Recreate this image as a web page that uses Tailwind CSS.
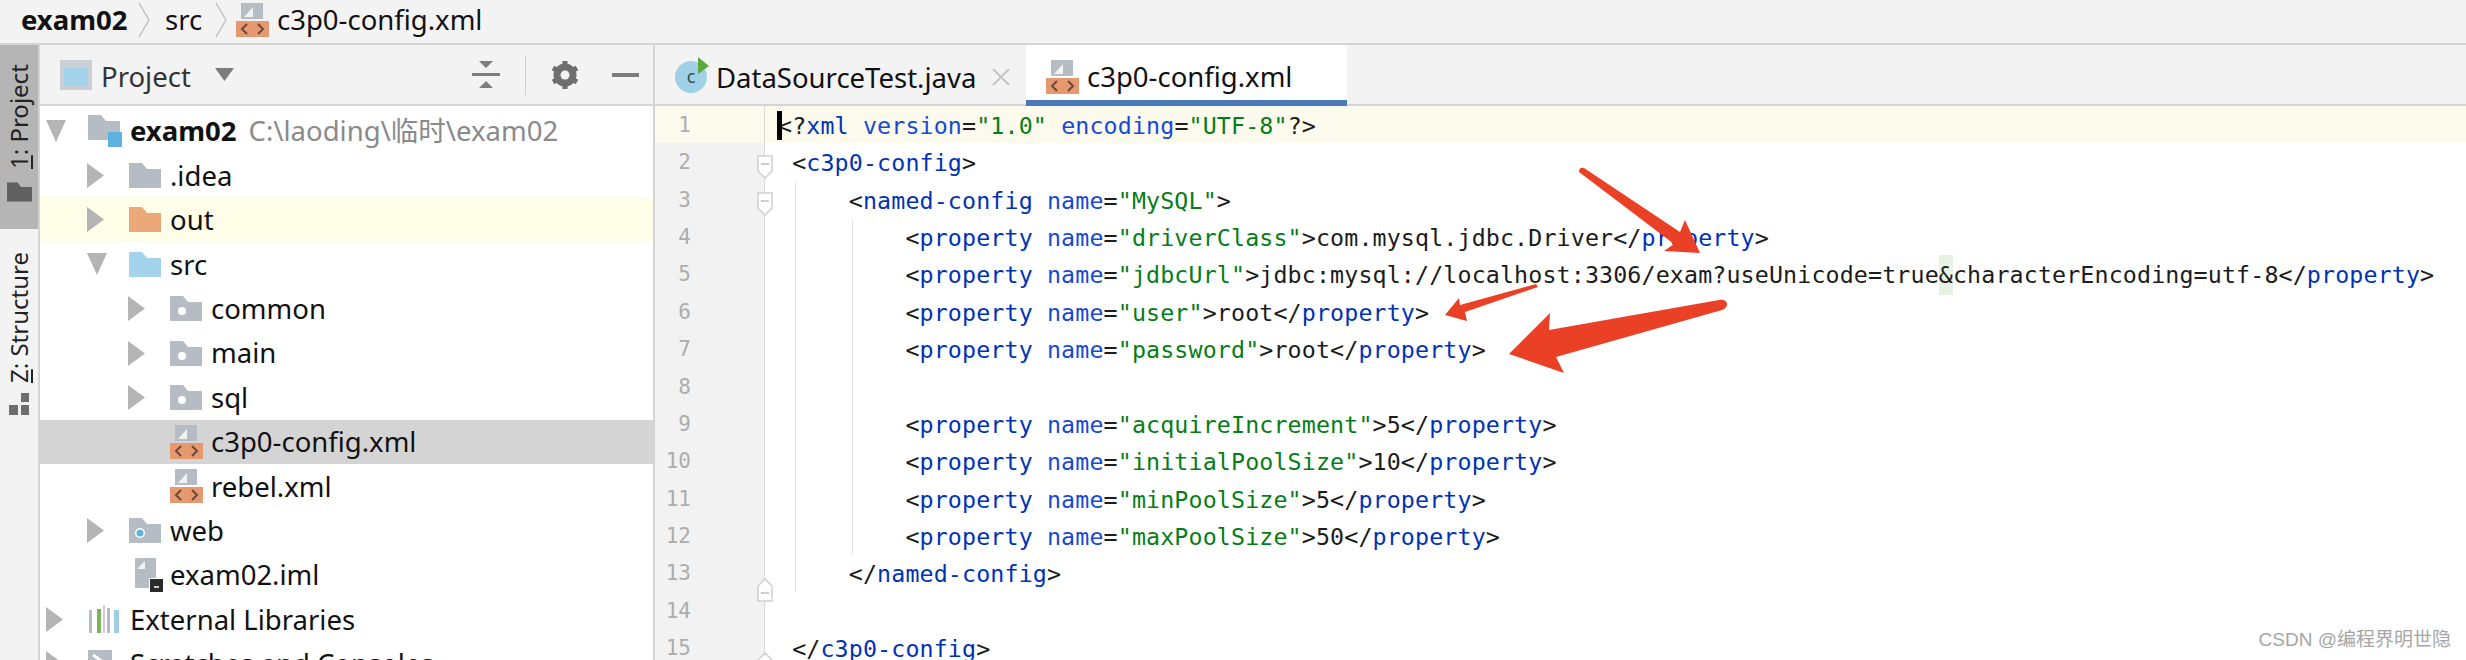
<!DOCTYPE html>
<html lang="en">
<head>
  <title>exam02 - c3p0-config.xml</title>
  <meta charset="utf-8">
  <script src="https://cdn.jsdelivr.net/npm/@tailwindcss/browser@4"></script>
</head>

<body class="bg-white">
  <!-- shared icons -->
  <svg class="hidden">
    <symbol id="folder" viewBox="0 0 32 25"><path d="M0 0H13L18 6H32V25H0Z"/></symbol>
    <symbol id="xml" viewBox="0 0 33 34">
      <path d="M5 0H27V16H5Z" fill="#b5bcc4"/>
      <path d="M8 14L17 4V14Z" fill="#f2f2f2"/>
      <path d="M0 18H33V34H0Z" fill="#e6986f"/>
      <path d="M11 21L6 26L11 31M22 21L27 26L22 31" fill="none" stroke="#6b4a3a" stroke-width="2"/>
    </symbol>
    <symbol id="right" viewBox="0 0 17 25"><path d="M0 0L17 12.5L0 25Z" fill="#b4b4b4"/></symbol>
    <symbol id="down" viewBox="0 0 20 22"><path d="M0 0H20L10 22Z" fill="#b4b4b4"/></symbol>
    <symbol id="fold" viewBox="0 0 16 24"><path d="M1 1H15V16L8 23L1 16Z" fill="#fff" stroke="#cfcfcf" stroke-width="1.5"/><path d="M4 9H12" stroke="#bdbdbd" stroke-width="1.5"/></symbol>
    <symbol id="foldend" viewBox="0 0 16 24"><path d="M1 23H15V8L8 1L1 8Z" fill="#fff" stroke="#cfcfcf" stroke-width="1.5"/><path d="M4 15H12" stroke="#bdbdbd" stroke-width="1.5"/></symbol>
  </svg>

  <div class="relative flex flex-col w-[2466px] h-[660px] overflow-hidden font-['Noto_Sans','Noto_Sans_CJK_SC',sans-serif] text-[27.500px] text-[#111]">

    <!-- Breadcrumb -->
    <div class="flex items-center h-[45px] shrink-0 bg-[#f3f3f3] border-b-2 border-[#d4d4d4] pl-[21px] pb-[4px]">
      <span class="font-bold w-[108px]">exam02</span>
      <svg class="w-[12px] h-[36px] ml-[9px]" viewBox="0 0 12 36"><path d="M1 1L11 18L1 35" fill="none" stroke="#c6c6c6" stroke-width="1.5"/></svg>
      <span class="ml-[15px] w-[38px]">src</span>
      <svg class="w-[12px] h-[36px] ml-[12px]" viewBox="0 0 12 36"><path d="M1 1L11 18L1 35" fill="none" stroke="#c6c6c6" stroke-width="1.5"/></svg>
      <svg class="w-[33px] h-[34px] ml-[9px]"><use href="#xml"/></svg>
      <span class="ml-[8px]">c3p0-config.xml</span>
    </div>

    <div class="flex flex-1 min-h-0">
      <!-- Tool window strip -->
      <div class="flex flex-col w-[40px] shrink-0 bg-[#f3f3f3] border-r-2 border-[#d4d4d4] text-[#222] text-[24px]">
        <div class="flex flex-col items-center h-[184px] bg-[#b5b5b5] pt-[18px]">
          <span class="[writing-mode:vertical-rl] rotate-180 leading-none h-[108px] text-center whitespace-nowrap"><span class="underline">1</span>: Project</span>
          <svg class="w-[25px] h-[22px] mt-[10px]" viewBox="0 0 32 25" fill="#616161"><use href="#folder"/></svg>
        </div>
        <div class="flex flex-col items-center pt-[24px]">
          <span class="[writing-mode:vertical-rl] rotate-180 leading-none h-[130px] text-center whitespace-nowrap"><span class="underline">Z</span>: Structure</span>
          <svg class="w-[22px] h-[22px] mt-[10px]" viewBox="0 0 22 22" fill="#6e6e6e"><path d="M13 0H21V9H13ZM1 12H10V22H1ZM13 12H21V22H13Z"/></svg>
        </div>
      </div>

      <!-- Project panel -->
      <div class="flex flex-col w-[615px] shrink-0 border-r-2 border-[#d4d4d4]">
        <div class="flex items-center h-[61px] shrink-0 bg-[#f3f3f3] border-b-2 border-[#d4d4d4] pl-[20px] text-[#333]">
          <svg class="w-[32px] h-[30px]" viewBox="0 0 32 30"><path d="M0 0H32V30H0Z" fill="#c9cfd4"/><path d="M4 8H28V26H4Z" fill="#a3d4ec"/></svg>
          <span class="ml-[9px] w-[92px] mt-[5px]">Project</span>
          <svg class="w-[19px] h-[13px] ml-[22px]" viewBox="0 0 19 13"><path d="M0 0H19L9.500 13Z" fill="#7d7d7d"/></svg>
          <svg class="w-[28px] h-[28px] ml-[238px]" viewBox="0 0 28 28" fill="#7d7d7d"><path d="M7 0H21L14 7ZM0 12H28V15H0ZM14 20L21 27H7Z"/></svg>
          <div class="w-px h-[40px] bg-[#d0d0d0] ml-[25px]"></div>
          <svg class="w-[28px] h-[30px] ml-[25px]" viewBox="0 0 28 30"><circle cx="14" cy="15" r="8.500" fill="none" stroke="#6e6e6e" stroke-width="6"/><path d="M14 1V29M2 8L26 22M26 8L2 22" stroke="#6e6e6e" stroke-width="5"/><circle cx="14" cy="15" r="4.500" fill="#f3f3f3"/></svg>
          <div class="w-[27px] h-[4px] bg-[#7d7d7d] ml-[33px]"></div>
        </div>

        <!-- Tree -->
        <div class="flex flex-col leading-none pt-[3px]">
          <div class="flex items-center h-[44.400px] pl-[6px]">
            <span class="w-[42px]"><svg class="w-[20px] h-[22px] ml-[0px]"><use href="#down"/></svg></span>
            <svg class="w-[34px] h-[32px] mr-[8px]" viewBox="0 0 34 32"><path d="M0 0H13L18 6H32V25H0Z" fill="#b5bcc4"/><path d="M20 17H34V32H20Z" fill="#5fb1de"/></svg>
            <span class="font-bold">exam02</span><span class="ml-[12px] text-[#8a8a8a]">C:\laoding\临时\exam02</span>
          </div>
          <div class="flex items-center h-[44.400px] pl-[47px]">
            <span class="w-[42px]"><svg class="w-[17px] h-[25px]"><use href="#right"/></svg></span>
            <svg class="w-[32px] h-[25px] mr-[9px] fill-[#b5bcc4]"><use href="#folder"/></svg>
            <span>.idea</span>
          </div>
          <div class="flex items-center h-[44.400px] pl-[47px] bg-[#fffee8]">
            <span class="w-[42px]"><svg class="w-[17px] h-[25px]"><use href="#right"/></svg></span>
            <svg class="w-[32px] h-[25px] mr-[9px] fill-[#eba878]"><use href="#folder"/></svg>
            <span>out</span>
          </div>
          <div class="flex items-center h-[44.400px] pl-[47px]">
            <span class="w-[42px]"><svg class="w-[20px] h-[22px]"><use href="#down"/></svg></span>
            <svg class="w-[32px] h-[25px] mr-[9px] fill-[#a3d4ec]"><use href="#folder"/></svg>
            <span>src</span>
          </div>
          <div class="flex items-center h-[44.400px] pl-[88px]">
            <span class="w-[42px]"><svg class="w-[17px] h-[25px]"><use href="#right"/></svg></span>
            <svg class="w-[32px] h-[25px] mr-[9px]" viewBox="0 0 32 25"><path d="M0 0H13L18 6H32V25H0Z" fill="#b5bcc4"/><circle cx="12" cy="15" r="4" fill="#fff"/></svg>
            <span>common</span>
          </div>
          <div class="flex items-center h-[44.400px] pl-[88px]">
            <span class="w-[42px]"><svg class="w-[17px] h-[25px]"><use href="#right"/></svg></span>
            <svg class="w-[32px] h-[25px] mr-[9px]" viewBox="0 0 32 25"><path d="M0 0H13L18 6H32V25H0Z" fill="#b5bcc4"/><circle cx="12" cy="15" r="4" fill="#fff"/></svg>
            <span>main</span>
          </div>
          <div class="flex items-center h-[44.400px] pl-[88px]">
            <span class="w-[42px]"><svg class="w-[17px] h-[25px]"><use href="#right"/></svg></span>
            <svg class="w-[32px] h-[25px] mr-[9px]" viewBox="0 0 32 25"><path d="M0 0H13L18 6H32V25H0Z" fill="#b5bcc4"/><circle cx="12" cy="15" r="4" fill="#fff"/></svg>
            <span>sql</span>
          </div>
          <div class="flex items-center h-[44.400px] pl-[130px] bg-[#d4d4d4]">
            <svg class="w-[33px] h-[34px] mr-[8px]"><use href="#xml"/></svg>
            <span>c3p0-config.xml</span>
          </div>
          <div class="flex items-center h-[44.400px] pl-[130px]">
            <svg class="w-[33px] h-[34px] mr-[8px]"><use href="#xml"/></svg>
            <span>rebel.xml</span>
          </div>
          <div class="flex items-center h-[44.400px] pl-[47px]">
            <span class="w-[42px]"><svg class="w-[17px] h-[25px]"><use href="#right"/></svg></span>
            <svg class="w-[32px] h-[25px] mr-[9px]" viewBox="0 0 32 25"><path d="M0 0H13L18 6H32V25H0Z" fill="#b5bcc4"/><circle cx="11" cy="15" r="5" fill="#fff"/><circle cx="11" cy="15" r="3.500" fill="#5fb1de"/></svg>
            <span>web</span>
          </div>
          <div class="flex items-center h-[44.400px] pl-[94px]">
            <svg class="w-[30px] h-[34px] mr-[6px]" viewBox="0 0 30 34"><path d="M1 0H22V30H1Z" fill="#b5bcc4"/><path d="M3 11L11 3V11Z" fill="#f2f2f2"/><path d="M15 20H30V34H15Z" fill="#fff"/><path d="M16 21H29V34H16Z" fill="#2b2b2b"/><path d="M20 29H25" stroke="#ccc" stroke-width="2"/></svg>
            <span>exam02.iml</span>
          </div>
          <div class="flex items-center h-[44.400px] pl-[6px]">
            <span class="w-[42px]"><svg class="w-[17px] h-[25px]"><use href="#right"/></svg></span>
            <svg class="w-[33px] h-[28px] mr-[9px]" viewBox="0 0 33 28"><path d="M1 5H4V28H1ZM19 3H22V28H19Z" fill="#b5bcc4"/><path d="M9 4H13V28H9Z" fill="#7cb45c"/><path d="M26 5H31V28H26Z" fill="#9fcde8"/><path d="M15 0H17V28H15Z" fill="#c9cfd4"/></svg>
            <span>External Libraries</span>
          </div>
          <div class="flex items-center h-[44.400px] pl-[6px]">
            <span class="w-[42px]"><svg class="w-[17px] h-[25px]"><use href="#right"/></svg></span>
            <svg class="w-[32px] h-[28px] mr-[10px]" viewBox="0 0 32 28"><path d="M0 0H24V28H0Z" fill="#b5bcc4"/><path d="M5 5L15 12L5 19" fill="none" stroke="#fff" stroke-width="3"/></svg>
            <span>Scratches and Consoles</span>
          </div>
        </div>
      </div>

      <!-- Editor -->
      <div class="flex flex-col flex-1 min-w-0">
        <!-- Tabs -->
        <div class="flex h-[61px] shrink-0 bg-[#f3f3f3] border-b-2 border-[#d4d4d4]">
          <div class="flex items-center w-[371px] pl-[20px]">
            <svg class="w-[34px] h-[36px]" viewBox="0 0 34 36"><circle cx="16" cy="20" r="16" fill="#9fd0e8"/><text x="16" y="26" text-anchor="middle" font-size="18" font-family="Noto Sans" fill="#3c4a52">c</text><path d="M23 0L34 9L23 17Z" fill="#59a83c"/></svg>
            <span class="ml-[7px] w-[262px] mt-[6px]">DataSourceTest.java</span>
            <svg class="w-[18px] h-[18px] ml-[14px] mt-[4px]" viewBox="0 0 18 18"><path d="M1 1L17 17M17 1L1 17" stroke="#c4c4c4" stroke-width="2"/></svg>
          </div>
          <div class="flex items-center w-[321px] h-[61px] bg-white border-b-[6px] border-[#4a78b8] pl-[20px] pt-[9px]">
            <svg class="w-[33px] h-[34px]"><use href="#xml"/></svg>
            <span class="ml-[8px]">c3p0-config.xml</span>
          </div>
        </div>

        <!-- Gutter and code -->
        <div class="relative flex flex-1 min-h-0 font-['DejaVu_Sans_Mono',monospace]">
          <div class="flex flex-col w-[110px] shrink-0 bg-[#f2f2f2] border-r border-[#d9d9d9] text-[21px] text-[#adadad] text-right pr-[73px] leading-[39px]">
            <div class="h-[37.360px] bg-[#fcfaed] -mr-[73px] pr-[73px]">1</div>
            <div class="h-[37.360px]">2</div>
            <div class="h-[37.360px]">3</div>
            <div class="h-[37.360px]">4</div>
            <div class="h-[37.360px]">5</div>
            <div class="h-[37.360px]">6</div>
            <div class="h-[37.360px]">7</div>
            <div class="h-[37.360px]">8</div>
            <div class="h-[37.360px]">9</div>
            <div class="h-[37.360px]">10</div>
            <div class="h-[37.360px]">11</div>
            <div class="h-[37.360px]">12</div>
            <div class="h-[37.360px]">13</div>
            <div class="h-[37.360px]">14</div>
            <div class="h-[37.360px]">15</div>
          </div>
          <div class="flex-1 min-w-0 pl-[13px] text-[23.300px] tracking-[0.130px] text-[#1c1c1c] leading-[40px] [&>div]:whitespace-pre">
            <div class="h-[37.360px] bg-[#fcfaed] -ml-[13px] pl-[13px]">&lt;?<span class="text-[#0033b3]">xml</span> <span class="text-[#174ad4]">version</span>=<span class="text-[#067d17]">"1.0"</span> <span class="text-[#174ad4]">encoding</span>=<span class="text-[#067d17]">"UTF-8"</span>?&gt;</div>
            <div class="h-[37.360px]"> &lt;<span class="text-[#0033b3]">c3p0-config</span>&gt;</div>
            <div class="h-[37.360px]">     &lt;<span class="text-[#0033b3]">named-config</span> <span class="text-[#174ad4]">name</span>=<span class="text-[#067d17]">"MySQL"</span>&gt;</div>
            <div class="h-[37.360px]">         &lt;<span class="text-[#0033b3]">property</span> <span class="text-[#174ad4]">name</span>=<span class="text-[#067d17]">"driverClass"</span>&gt;com.mysql.jdbc.Driver&lt;/<span class="text-[#0033b3]">property</span>&gt;</div>
            <div class="h-[37.360px]">         &lt;<span class="text-[#0033b3]">property</span> <span class="text-[#174ad4]">name</span>=<span class="text-[#067d17]">"jdbcUrl"</span>&gt;jdbc:mysql://localhost:3306/exam?useUnicode=true<span class="inline-block bg-[#e8f2e2]">&amp;</span>characterEncoding=utf-8&lt;/<span class="text-[#0033b3]">property</span>&gt;</div>
            <div class="h-[37.360px]">         &lt;<span class="text-[#0033b3]">property</span> <span class="text-[#174ad4]">name</span>=<span class="text-[#067d17]">"user"</span>&gt;root&lt;/<span class="text-[#0033b3]">property</span>&gt;</div>
            <div class="h-[37.360px]">         &lt;<span class="text-[#0033b3]">property</span> <span class="text-[#174ad4]">name</span>=<span class="text-[#067d17]">"password"</span>&gt;root&lt;/<span class="text-[#0033b3]">property</span>&gt;</div>
            <div class="h-[37.360px]"></div>
            <div class="h-[37.360px]">         &lt;<span class="text-[#0033b3]">property</span> <span class="text-[#174ad4]">name</span>=<span class="text-[#067d17]">"acquireIncrement"</span>&gt;5&lt;/<span class="text-[#0033b3]">property</span>&gt;</div>
            <div class="h-[37.360px]">         &lt;<span class="text-[#0033b3]">property</span> <span class="text-[#174ad4]">name</span>=<span class="text-[#067d17]">"initialPoolSize"</span>&gt;10&lt;/<span class="text-[#0033b3]">property</span>&gt;</div>
            <div class="h-[37.360px]">         &lt;<span class="text-[#0033b3]">property</span> <span class="text-[#174ad4]">name</span>=<span class="text-[#067d17]">"minPoolSize"</span>&gt;5&lt;/<span class="text-[#0033b3]">property</span>&gt;</div>
            <div class="h-[37.360px]">         &lt;<span class="text-[#0033b3]">property</span> <span class="text-[#174ad4]">name</span>=<span class="text-[#067d17]">"maxPoolSize"</span>&gt;50&lt;/<span class="text-[#0033b3]">property</span>&gt;</div>
            <div class="h-[37.360px]">     &lt;/<span class="text-[#0033b3]">named-config</span>&gt;</div>
            <div class="h-[37.360px]"></div>
            <div class="h-[37.360px]"> &lt;/<span class="text-[#0033b3]">c3p0-config</span>&gt;</div>
          </div>

          <!-- caret, fold marks and indent guides sit over the code -->
          <div class="absolute left-[122px] top-[5px] w-[5px] h-[29px] bg-black"></div>
          <div class="absolute left-[140px] top-[76px] w-px h-[410px] bg-[#e2e2e2]"></div>
          <div class="absolute left-[197px] top-[113px] w-px h-[336px] bg-[#e2e2e2]"></div>
          <svg class="absolute left-[102px] top-[49px] w-[16px] h-[24px]"><use href="#fold"/></svg>
          <svg class="absolute left-[102px] top-[86px] w-[16px] h-[24px]"><use href="#fold"/></svg>
          <svg class="absolute left-[102px] top-[472px] w-[16px] h-[24px]"><use href="#foldend"/></svg>
          <svg class="absolute left-[102px] top-[546px] w-[16px] h-[24px]"><use href="#foldend"/></svg>
        </div>
      </div>
    </div>

    <!-- Red annotation arrows drawn over the screenshot -->
    <svg class="absolute left-0 top-0 w-[2466px] h-[660px] pointer-events-none" viewBox="0 0 2466 660">
      <path fill="#ea4026" d="M1579 172Q1579 167 1584 168L1680 232L1685 220L1700 253L1664 251L1674 244Z"/>
      <path fill="#ea4026" d="M1536 284L1460 305L1459 298L1445 315L1467 321L1465 312L1538 287Z"/>
      <path fill="#ea4026" d="M1719 300Q1726 299 1727 304Q1727 308 1722 310L1556 357L1564 373L1509 354L1550 313L1549 330Z"/>
    </svg>

    <!-- Watermark -->
    <span class="absolute right-[15px] bottom-[6px] font-['Liberation_Sans','Noto_Sans_CJK_SC',sans-serif] text-[19px] text-[#a6a6a6]">CSDN @编程界明世隐</span>
  </div>
</body>
</html>
